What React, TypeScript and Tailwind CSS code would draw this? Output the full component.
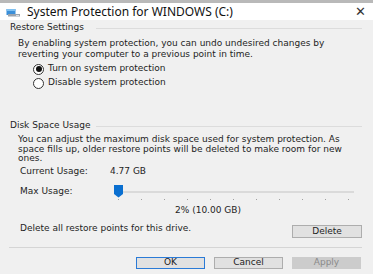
import React from 'react';

const ticks = [0, 1, 2, 3, 4, 5, 6, 7, 8, 9, 10];

function DriveIcon() {
  return (
    <svg width="15" height="9" viewBox="0 0 15 9">
      <rect x="0.5" y="1" width="9" height="6" fill="#3a8fd9" />
      <rect x="0.5" y="1" width="9" height="2" fill="#7fc0f0" />
      <rect x="2" y="6" width="12" height="2.5" fill="#9aa3ad" />
      <rect x="10" y="7" width="3" height="1" fill="#d8dde2" />
    </svg>
  );
}

function Slider() {
  return (
    <div className="relative w-[240px] h-[20px]">
      <div className="absolute left-[5px] right-0 top-[9px] h-[2px] bg-[#e5e5e5] border-y border-[#dadada]" />
      <div className="absolute left-[0px] top-[3px]">
        <svg width="9" height="13" viewBox="0 0 9 13">
          <path d="M0 0 H9 V9 L4.5 12.5 L0 9 Z" fill="#0a6fd0" />
        </svg>
      </div>
      {ticks.map(i => (
        <div key={i} className="absolute top-[17px] w-[1px] h-[1px] bg-[#a0a0a0]" style={{ left: 4 + i * 23 }} />
      ))}
    </div>
  );
}

function Radio({ checked, label }: { checked?: boolean, label: string }) {
  return (
    <div className="flex items-center h-[14px] pl-[24px]">
      <div className="w-[11px] h-[11px] rounded-full border border-[#333] bg-white flex items-center justify-center">
        {checked && <div className="w-[6px] h-[6px] rounded-full bg-[#111]" />}
      </div>
      <span className="ml-[4px]">{label}</span>
    </div>
  );
}

function Header({ title }: { title: string }) {
  return (
    <div className="flex items-center h-[12px]">
      <span className="pl-[1px] w-[87px] whitespace-nowrap">{title}</span>
      <div className="flex-1 h-[1px] bg-[#dcdcdc]" />
    </div>
  );
}

function Btn({ label, kind }: { label: string, kind?: 'default' | 'disabled' }) {
  const cls = kind === 'default'
    ? 'border-[#2a7ad6] bg-[#e1e1e1] text-[#222]'
    : kind === 'disabled'
      ? 'border-[#cccccc] bg-[#cccccc] text-[#8a8a8a]'
      : 'border-[#adadad] bg-[#e1e1e1] text-[#222]';
  return (
    <div className={`w-[69px] h-[12px] border flex items-center justify-center ${cls}`}>{label}</div>
  );
}

export default function App() {
  return (
    <div className="w-[373px] h-[274px] bg-[#f0f0f0] text-[#1e1e1e] text-[9px] overflow-hidden" style={{ fontFamily: '"DejaVu Sans", Verdana, sans-serif' }}>
      <div className="h-[3px] bg-[#b9b9b9]" />
      <div className="h-[17px] bg-white flex items-center" style={{ fontFamily: '"Noto Sans", "Open Sans", sans-serif' }}>
        <div className="ml-[6px] mt-[1px]"><DriveIcon /></div>
        <span className="ml-[6px] text-[12px] text-[#111]">System Protection for WINDOWS (C:)</span>
        <span className="ml-auto mr-[7px] text-[13px] font-light text-[#333] leading-none">✕</span>
      </div>
      <div className="pl-[9px] pr-[11px]">
        <div className="mt-[2px]">
          <Header title="Restore Settings" />
        </div>
        <div className="mt-[4px] pl-[9px] leading-[10.5px] whitespace-nowrap">
          By enabling system protection, you can undo undesired changes by<br />
          reverting your computer to a previous point in time.
        </div>
        <div className="mt-[3px]">
          <Radio checked label="Turn on system protection" />
          <Radio label="Disable system protection" />
        </div>
        <div className="mt-[30px]">
          <Header title="Disk Space Usage" />
        </div>
        <div className="mt-[3px] pl-[9px] leading-[9.7px] whitespace-nowrap">
          You can adjust the maximum disk space used for system protection. As<br />
          space fills up, older restore points will be deleted to make room for new<br />
          ones.
        </div>
        <div className="mt-[2px] h-[12px] flex items-center pl-[11px]">
          <span className="w-[90px]">Current Usage:</span>
          <span>4.77 GB</span>
        </div>
        <div className="mt-[4px] h-[20px] flex items-center pl-[11px]">
          <span className="w-[94px]">Max Usage:</span>
          <Slider />
        </div>
        <div className="mt-[3px] h-[12px] flex items-center pl-[166px]">2% (10.00 GB)</div>
        <div className="mt-[5px] h-[16px] flex items-start pl-[11px]">
          <span className="leading-[12px]">Delete all restore points for this drive.</span>
          <div className="ml-auto mt-[3px] w-[70px] h-[13px] border border-[#adadad] bg-[#e1e1e1] flex items-center justify-center">Delete</div>
        </div>
        <div className="mt-[9px] h-[1px] bg-[#d5d5d5]" />
        <div className="mt-[9px] flex justify-end gap-[9px] pr-[1px]">
          <Btn label="OK" kind="default" />
          <Btn label="Cancel" />
          <Btn label="Apply" kind="disabled" />
        </div>
      </div>
    </div>
  );
}
